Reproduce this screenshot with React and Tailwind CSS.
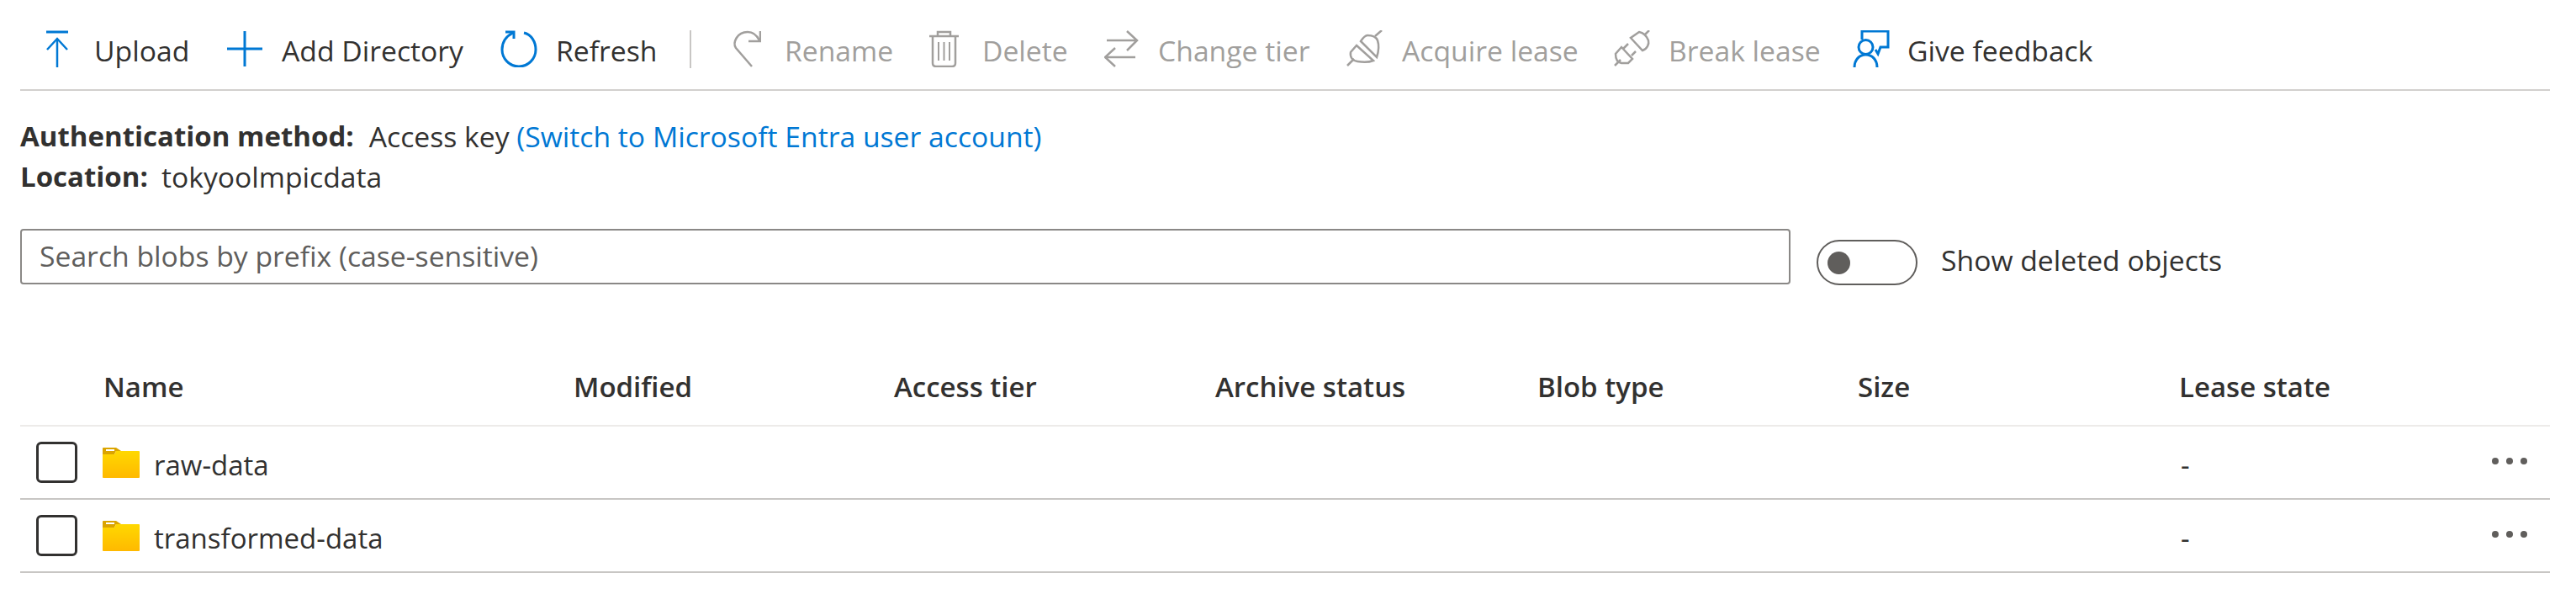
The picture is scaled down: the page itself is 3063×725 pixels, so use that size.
import React from "react";

const Blue = "#0078d4";
const Gray = "#a19f9d";

// --- toolbar icons ---
const Svg = ({ w, h, color, children }) => (
  <svg width={w} height={h} viewBox={`0 0 ${w} ${h}`} fill="none" stroke={color} strokeWidth="2.5" className="block shrink-0">
    {children}
  </svg>
);

const UploadIcon = () => (
  <Svg w={26} h={44} color={Blue}>
    <path d="M0 2H26" strokeWidth="3" />
    <path d="M13 44V10" />
    <path d="M1 23L13 10L25 23" />
  </Svg>
);

const AddIcon = () => (
  <Svg w={42} h={42} color={Blue}>
    <path d="M21 0V42M0 21H42" strokeWidth="3" />
  </Svg>
);

const RefreshIcon = () => (
  <Svg w={44} h={44} color={Blue}>
    <path d="M28 3C37 5 42 14 42 23C42 34 33 43 22 43C11 43 2 34 2 23C2 14 7 7 15 3" strokeWidth="3" />
    <path d="M6 2H16V10" strokeWidth="3" />
  </Svg>
);

const RenameIcon = () => (
  <Svg w={35} h={44} color={Gray}>
    <path d="M24 43L5 21C1 15 6 2 19 2C25 2 30 6 33 12" />
    <path d="M34 1V13H20" />
  </Svg>
);

const DeleteIcon = () => (
  <Svg w={35} h={44} color={Gray}>
    <path d="M0 7H35M10 7V2H25V7" />
    <path d="M4 7V39C4 41 5 43 8 43H27C30 43 31 41 31 39V7" />
    <path d="M11 14V36M17.5 14V36M24 14V36" strokeWidth="2" />
  </Svg>
);

const ChangeTierIcon = () => (
  <Svg w={41} h={44} color={Gray}>
    <path d="M3 12H39M27 1L39 12L27 24" />
    <path d="M1 32H37M13 21L1 32L13 43" />
  </Svg>
);

const AcquireIcon = () => (
  <Svg w={46} h={44} color={Gray}>
    <path d="M2 42L10 34M35 7L43 0" />
    <path d="M13 18L33 36C28 38 20 38 14 37C8 36 5 32 6 26Z" />
    <path d="M18 13L37 32C39 26 40 18 38 12C36 7 32 6 26 6C23 6 20 10 18 13Z" />
  </Svg>
);

const BreakIcon = () => (
  <Svg w={46} h={44} color={Gray}>
    <path d="M2 42L9 35M38 5L43 0" />
    <path d="M10 20L23 34L18 39H10C4 38 3 33 3 28Z" />
    <path d="M12 22L18 16M22 30L27 25" />
    <path d="M21 9L35 24C41 22 43 16 42 12C40 7 37 3 31 2Z" />
  </Svg>
);

const FeedbackIcon = () => (
  <Svg w={44} h={44} color={Blue}>
    <path d="M11 11V1H42V20H33L30 28L27 23" strokeWidth="3" />
    <circle cx="15.5" cy="20" r="8.5" strokeWidth="3" />
    <path d="M2 44C2 35 8 29 15.5 29C23 29 29 35 29 44" strokeWidth="3" />
  </Svg>
);

const FolderIcon = () => (
  <svg width="44" height="36" viewBox="0 0 44 36" className="block shrink-0">
    <defs>
      <linearGradient id="folderFill" x1="0" y1="0" x2="0" y2="1">
        <stop offset="0" stopColor="#ffd800" />
        <stop offset="1" stopColor="#ffb900" />
      </linearGradient>
    </defs>
    <path d="M0 1C0 0.5 0.5 0 1 0H16L22 4H16L14 8H0Z" fill="#dba400" />
    <path d="M0 8H14L16 4H43C43.5 4 44 4.5 44 5V35C44 35.5 43.5 36 43 36H1C0.5 36 0 35.5 0 35Z" fill="url(#folderFill)" />
    <rect x="4" y="2" width="10" height="2" fill="#ffffff" />
  </svg>
);

// --- toolbar ---
const ToolbarButton = ({ width, iconBox, icon, label, disabled }) => (
  <div className={`flex items-center ${width}`}>
    <div className={iconBox}>{icon}</div>
    <span className={`mt-1 whitespace-nowrap ${disabled ? "text-[#a19f9d]" : "text-[#323130]"}`}>{label}</span>
  </div>
);

const columns = [
  { label: "Name", width: "w-[559px]" },
  { label: "Modified", width: "w-[381px]" },
  { label: "Access tier", width: "w-[382px]" },
  { label: "Archive status", width: "w-[383px]" },
  { label: "Blob type", width: "w-[381px]" },
  { label: "Size", width: "w-[382px]" },
  { label: "Lease state", width: "w-[300px]" },
];

const rows = ["raw-data", "transformed-data"];

export default function App() {
  return (
    <div className="min-h-[725px] w-[3063px] overflow-hidden bg-white pl-6 pr-[31px] font-['Open_Sans',sans-serif] text-[33.7px] text-[#323130]">
      {/* --- TOOLBAR --- */}
      <div className="flex h-[108px] items-center border-b-2 border-[#d2d0ce] pl-[31px] pt-[10px]">
        <ToolbarButton width="w-[215px]" iconBox="w-[57px]" icon={<UploadIcon />} label="Upload" />
        <ToolbarButton width="w-[325px]" iconBox="w-[65px]" icon={<AddIcon />} label="Add Directory" />
        <ToolbarButton width="w-[225px]" iconBox="w-[66px]" icon={<RefreshIcon />} label="Refresh" />
        <div className="mr-12 h-[45px] w-[2px] bg-[#c8c6c4]" />
        <ToolbarButton disabled width="w-[235px]" iconBox="w-[63px]" icon={<RenameIcon />} label="Rename" />
        <ToolbarButton disabled width="w-[208px]" iconBox="w-[63px]" icon={<DeleteIcon />} label="Delete" />
        <ToolbarButton disabled width="w-[287px]" iconBox="w-[64px]" icon={<ChangeTierIcon />} label="Change tier" />
        <ToolbarButton disabled width="w-[318px]" iconBox="w-[67px]" icon={<AcquireIcon />} label="Acquire lease" />
        <ToolbarButton disabled width="w-[285px]" iconBox="w-[66px]" icon={<BreakIcon />} label="Break lease" />
        <ToolbarButton width="w-[300px]" iconBox="w-[65px]" icon={<FeedbackIcon />} label="Give feedback" />
      </div>

      {/* --- INFO --- */}
      <div className="pt-[30px] leading-[48px]">
        <div className="flex gap-[18px] whitespace-nowrap">
          <span className="text-[33px] font-bold">Authentication method:</span>
          <span>
            Access key <span className="text-[#0078d4]">(Switch to Microsoft Entra user account)</span>
          </span>
        </div>
        <div className="flex gap-4 whitespace-nowrap">
          <span className="text-[33px] font-bold">Location:</span>
          <span>tokyoolmpicdata</span>
        </div>
      </div>

      {/* --- SEARCH --- */}
      <div className="mt-[36px] flex items-center">
        <div className="flex h-[66px] w-[2105px] items-center rounded border-2 border-[#8a8886] pl-[21px] text-[#605e5c]">
          Search blobs by prefix (case-sensitive)
        </div>
        <div className="ml-[31px] mt-[15px] flex h-[54px] w-[120px] items-center rounded-full border-2 border-[#605e5c] pl-[11px]">
          <div className="h-[27px] w-[27px] rounded-full bg-[#605e5c]" />
        </div>
        <span className="ml-7 mt-[10px] whitespace-nowrap">Show deleted objects</span>
      </div>

      {/* --- TABLE --- */}
      <div className="mt-[86px]">
        <div className="flex h-[82px] items-center border-b-2 border-[#edebe9] pb-[10px] text-[33px] font-semibold">
          <div className="w-[99px]" />
          {columns.map((col) => (
            <div key={col.label} className={col.width}>
              {col.label}
            </div>
          ))}
        </div>
        {rows.map((name) => (
          <div key={name} className="relative flex h-[87px] items-center border-b-2 border-[#c8c6c4] text-[33px]">
            <div className="w-[98px] pl-[19px]">
              <div className="h-[49px] w-[49px] rounded-md border-[3px] border-[#323130]" />
            </div>
            <div className="flex w-[2471px] items-center">
              <FolderIcon />
              <span className="ml-[17px] mt-[6px]">{name}</span>
            </div>
            <span className="mt-[6px]">-</span>
            <div className="absolute right-[27px] top-[37px] flex gap-[9px]">
              <div className="h-2 w-2 rounded-full bg-[#605e5c]" />
              <div className="h-2 w-2 rounded-full bg-[#605e5c]" />
              <div className="h-2 w-2 rounded-full bg-[#605e5c]" />
            </div>
          </div>
        ))}
      </div>
    </div>
  );
}
